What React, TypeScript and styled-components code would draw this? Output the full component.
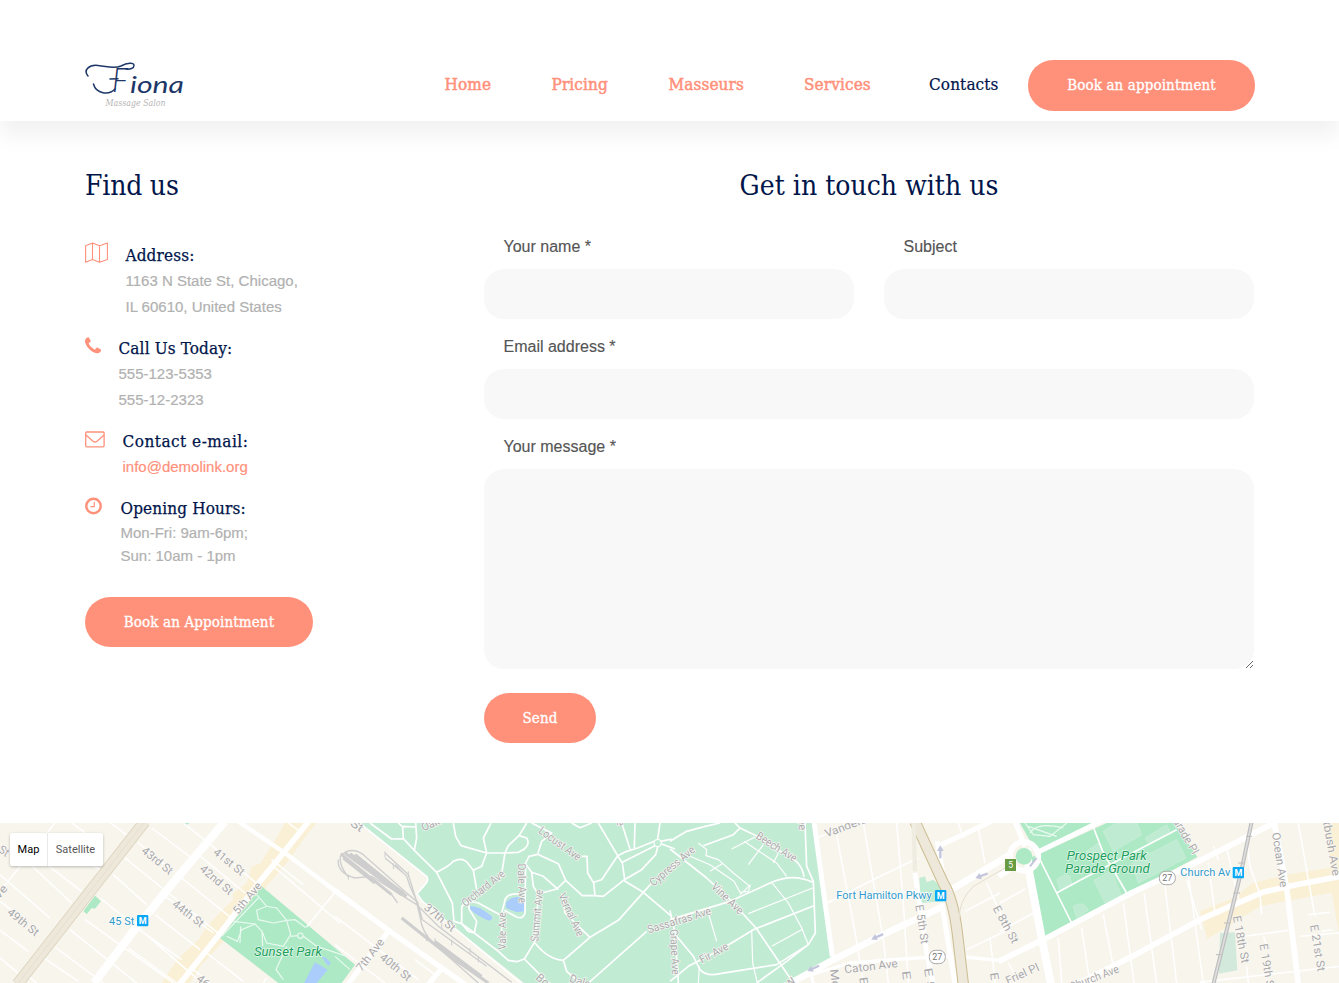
import React from 'react';
import styled, { createGlobalStyle } from 'styled-components';

const CORAL = '#ff917b';
const NAVY = '#00154a';
const SERIF = '"DejaVu Serif Condensed", "DejaVu Serif", serif';
const SANS = '"Liberation Sans", Arial, sans-serif';

const GlobalStyle = createGlobalStyle`
  * { box-sizing: border-box; }
  body { margin: 0; background: #fff; font-family: ${SANS}; overflow: hidden; }
`;

const Page = styled.div`
  width: 1339px;
  height: 983px;
  overflow: hidden;
  display: flex;
  flex-direction: column;
`;

const Header = styled.header`
  height: 121px;
  flex: none;
  padding: 60px 84px 10px 85px;
  display: flex;
  align-items: flex-start;
  box-shadow: 0 15px 20px rgba(0, 0, 0, 0.056);
`;

const Logo = styled.svg`
  width: 104px;
  height: 50px;
  flex: none;
  overflow: visible;
`;

const Nav = styled.nav`
  display: flex;
  gap: 59.5px;
  margin-left: auto;
  margin-right: 30px;
  height: 48px;
  align-items: center;
`;

const NavLink = styled.a<{ $w: number; $active?: boolean }>`
  font: 17px/24px ${SERIF};
  font-stretch: condensed;
  width: ${(p) => p.$w}px;
  white-space: nowrap;
  letter-spacing: 0.12px;
  color: ${(p) => (p.$active ? NAVY : CORAL)};
  -webkit-text-stroke: ${(p) => (p.$active ? '0.2px' : '0.5px')} currentColor;
`;

const Button = styled.button<{ $w: number; $h?: number }>`
  width: ${(p) => p.$w}px;
  height: ${(p) => p.$h ?? 50}px;
  flex: none;
  border: 0;
  padding: 0 0 ${(p) => (p.$h ? 2 : 0)}px;
  border-radius: 25px;
  background: ${CORAL};
  color: #fff;
  font: 15px/24px ${SERIF};
  font-stretch: condensed;
  letter-spacing: 0.12px;
  -webkit-text-stroke: 0.3px currentColor;
  white-space: nowrap;
`;

const Main = styled.main`
  display: flex;
  height: 702px;
  flex: none;
  padding: 44px 85px 0;
`;

const FindUs = styled.section`
  width: 399px;
  flex: none;
`;

const Contact = styled.form`
  width: 770px;
  flex: none;
`;

const Title = styled.h2<{ $center?: boolean }>`
  margin: 0;
  height: 40px;
  font: 400 28px/41px ${SERIF};
  font-stretch: condensed;
  letter-spacing: ${(p) => (p.$center ? 0.02 : -0.2)}px;
  color: ${NAVY};
  text-align: ${(p) => (p.$center ? 'center' : 'left')};
`;

const InfoList = styled.div`
  margin-top: 36px;
  display: flex;
  flex-direction: column;
`;

const InfoItem = styled.div<{ $h: number; $gap: number }>`
  display: flex;
  height: ${(p) => p.$h}px;
  column-gap: ${(p) => p.$gap}px;
`;

const InfoIcon = styled.svg`
  flex: none;
  margin-top: 1px;
`;

const InfoText = styled.div`
  display: flex;
  flex-direction: column;
`;

const InfoHead = styled.strong<{ $spacing?: number }>`
  height: 27px;
  font: 400 17px/29px ${SERIF};
  font-stretch: condensed;
  letter-spacing: ${(p) => p.$spacing ?? 0.14}px;
  -webkit-text-stroke: 0.25px currentColor;
  color: ${NAVY};
`;

const InfoLine = styled.span<{ $lh?: number; $accent?: boolean }>`
  font-size: 15px;
  line-height: ${(p) => p.$lh ?? 26}px;
  white-space: nowrap;
  color: ${(p) => (p.$accent ? CORAL : '#b1b1b1')};
  -webkit-text-stroke: 0.2px currentColor;
`;

const Fields = styled.div`
  display: grid;
  grid-template-columns: 1fr 1fr;
  column-gap: 30px;
  margin-top: 14px;
`;

const Field = styled.label<{ $wide?: boolean }>`
  grid-column: ${(p) => (p.$wide ? '1 / -1' : 'auto')};
  display: flex;
  flex-direction: column;
`;

const Label = styled.span`
  height: 50px;
  padding: 16px 0 0 19.5px;
  font-size: 16px;
  line-height: 24px;
  color: #555;
  -webkit-text-stroke: 0.15px currentColor;
`;

const Input = styled.input`
  height: 50px;
  width: 100%;
  border: 0;
  border-radius: 20px;
  background: #f8f8f8;
`;

const Message = styled.textarea`
  height: 200px;
  width: 100%;
  border: 0;
  border-radius: 20px;
  background: #f8f8f8;
  resize: vertical;
`;

const SendRow = styled.div`
  padding-top: 24px;
`;

const MapPanel = styled.section`
  position: relative;
  height: 160px;
  flex: none;
  overflow: hidden;
  background: #f8f5ed;
`;

const MapSvg = styled.svg`
  display: block;
`;

const MapSwitch = styled.div`
  position: absolute;
  left: 10px;
  top: 10px;
  height: 33px;
  display: flex;
  background: #fff;
  border-radius: 2px;
  box-shadow: 0 1px 3px rgba(0, 0, 0, 0.25);
`;

const MapTab = styled.span<{ $w: number; $active?: boolean }>`
  width: ${(p) => p.$w}px;
  font: 11px/33px Roboto, sans-serif;
  text-align: center;
  color: ${(p) => (p.$active ? '#000' : '#565656')};
  & + & { border-left: 1px solid #e8e8e8; }
`;

type StreetLabel = [number, number, number, number, string];
type Road = [width: number, d: string];

interface Sector {
  x: number;
  roads: Road[];
  labels: StreetLabel[];
}

/* Map units are one third of a pixel; each sector is offset by x pixels. */
const sectors: Sector[] = [
  {
    x: 0,
    roads: [
      [4.5, 'M215 0L300 62 M332 0L388 42 M165 0L0 205 M0 155L150 285 M70 105L215 240 M145 128L245 205 M0 235L60 280 M0 322L85 385 M0 405L60 455 M250 110L300 140'],
      [4.5, 'M455 15L575 105 M550 0L632 65L780 190 M595 95L735 210 M415 60L520 145 M545 165L700 290 M375 105L660 335 M340 155L440 245 M490 215L640 330 M300 225L445 340L600 475 M255 290L520 480 M210 320L410 480 M165 372L310 480 M125 400L235 475 M85 460L110 480 M385 375L530 480 M425 325L545 410 M465 275L600 380'],
      [4.5, 'M865 0L900 25 M815 110L910 185 M820 130L1020 300 M1005 208L920 312 M620 390L730 475 M575 435L630 480 M800 465L790 480'],
      [25, 'M282 480L400 325L520 178L674 -4'],
      [17, 'M538 484L665 325L780 175L850 90L925 -4'],
      [13, 'M716 -4L855 90L1022 216'],
    ],
    labels: [
      [430, 78, 515, 147, '43rd St'], [645, 82, 730, 150, '41st St'], [605, 132, 695, 208, '42nd St'],
      [522, 238, 608, 305, '44th St'], [27, 262, 113, 332, '49th St'], [705, 268, 778, 182, '5th Ave'],
      [595, 462, 680, 530, '46th St'], [0, 75, 25, 92, 'St'], [-28, 240, 15, 190, 'Ave'],
    ],
  },
  {
    x: 335,
    roads: [
      [4.5, 'M0 280L250 470 M0 365L110 450L150 480 M240 410L300 455'],
      [16, 'M-4 200L165 325L390 484 M160 325L38 484 M325 430L280 484'],
      [5, 'M73 0L275 160Q282 170 272 182L246 212L262 235L560 482'],
      [5, 'M105 0L170 48L205 47L238 82L305 148L352 240L357 295L380 302L418 330L490 385L520 412L545 416L568 408L630 470 M205 47L203 12L190 0 M238 82L245 45L242 0 M203 10L245 12 M305 148Q345 128 355 115Q385 100 402 125L415 142L425 200 M355 0L362 40L378 68L455 90L445 45L468 0 M455 90L440 130L415 142 M455 90L510 90L550 88Q590 70 575 45L552 38L520 68L510 90L502 140L498 165 M552 38L575 0 M380 302L380 260Q378 240 410 236L430 240L500 278 M400 238L403 260L425 295L418 330L400 325L380 302 M500 380L500 270L508 240Q510 210 550 213 M508 262L545 282Q565 290 570 270L572 120L582 100L608 94L620 55L650 30L590 0 M608 94L670 122L692 172L742 218L780 218L776 180L758 150L756 100L740 100 M570 120L590 148L625 160L670 200 M590 148L595 190L610 215L600 355L568 408 M692 172L665 198L620 210 M776 178L800 170L848 98L875 85L908 75L958 55 M848 98L790 0 M780 218L805 220L868 170L920 140L962 95L968 72 M848 98L862 120L870 175L925 208L1010 280 M862 118L960 68 M885 78L860 0 M898 75L900 0 M975 0L968 48 M978 62L1020 78 M978 55L1010 48 M680 212L690 270L765 343L850 292L925 208L950 180 M765 343L685 412Q640 410 600 360 M685 412L695 445L735 480 M760 480L935 325 M710 0L735 14L770 0'],
    ],
    labels: [
      [50, -4, 83, 18, 'St'], [260, 14, 312, -8, 'Oak'], [615, 18, 735, 105, 'Locust Ave'],
      [384, 243, 505, 148, 'Orchard Ave'], [560, 122, 563, 240, 'Dale Ave'], [500, 380, 500, 268, 'Vale Ave'],
      [598, 356, 612, 200, 'Summit Ave'], [680, 212, 738, 338, 'Vernal Ave'], [272, 248, 358, 318, '37th St'],
      [70, 440, 140, 350, '7th Ave'], [140, 397, 225, 467, '40th St'], [948, 182, 1075, 75, 'Cypress Ave'],
      [938, 320, 1127, 262, 'Sassafras Ave'], [608, 458, 670, 510, 'Boxw'], [705, 464, 765, 484, 'Dale'], [855, -38, 858, 8, 'Ave'],
    ],
  },
  {
    x: 670,
    roads: [
      [5, 'M0 55L50 25L105 10L150 0 M0 78L110 165L180 230L258 315L370 480 M100 68L190 35L210 15L258 38L330 85Q395 110 402 162 M210 15L195 0 M405 0L410 130L430 175L436 330L415 365L350 415L260 480 M0 290L180 235L305 178Q370 150 428 178 M432 248L250 320L155 378L55 430L0 475 M20 340L70 400L90 440Q110 462 150 452L320 425L415 365 M0 262L15 330L25 480'],
      [3.5, 'M85 60L110 80L108 98L145 110L190 150L240 190L235 205L210 208L192 175L120 125L60 100 M120 145L160 120 M210 215L242 185 M222 55L320 120L350 160 M185 78L255 42 M235 125L280 65 M310 120L325 90 M115 270L140 355 M305 178L355 240L395 315L415 365 M235 272L428 195 M305 370L395 320 M245 320L248 420L262 480 M85 480L88 430'],
      [4.5, 'M442 45L475 30 M497 20L560 355L580 480 M580 0L640 350L655 480 M680 0L700 240L715 480 M472 240L620 165L745 105 M700 210L735 200 M865 0L880 45 M925 15L945 120 M890 380L1020 318 M885 265L990 210 M960 345L968 410L975 480 M950 180L1000 290'],
      [10, 'M400 462L540 420L740 405L850 400 M885 402L985 412L1020 402 M425 460L430 484'],
      [15, 'M432 -4L487 400 M735 150L770 390L790 484 M802 55L818 150 M815 240L855 484 M800 72L962 -4'],
      [20, 'M365 478L490 410L660 325L815 252 M835 205L1025 92'],
    ],
    labels: [
      [465, 32, 590, -14, 'Vanderb'], [262, 35, 378, 108, 'Beech Ave'], [388, -34, 400, 22, 'Ave'],
      [130, 185, 216, 267, 'Vine Ave'], [90, 412, 172, 367, 'Fir Ave'], [523, 439, 683, 420, 'Caton Ave'],
      [748, 245, 765, 362, 'E 5th St'], [12, 318, 18, 455, 'Grape Ave'], [492, 438, 502, 520, 'McD'],
      [580, 462, 592, 555, 'E 3rd'], [708, 443, 722, 550, 'E 4th'], [774, 435, 790, 540, 'E 5th'], [972, 448, 985, 540, 'E 7th'], [350, 490, 372, 468, 'W'],
    ],
  },
  {
    x: 1000,
    roads: [
      [4.5, 'M0 240L75 198 M0 325L100 270 M25 420L42 450 M175 345L185 480 M245 315L270 480 M310 275L340 430 M370 240L402 480 M432 210L470 480 M495 190L530 480 M560 120L610 480 M640 70L655 110 M680 75L720 245 M560 170L605 320 M625 120L645 270 M740 50L750 130L780 215L785 275 M895 0L925 170L945 280 M925 275L990 268 M735 340L865 322 M965 325L995 320 M790 340L800 370 M740 430L745 480 M600 478L1020 430 M900 340L1020 330'],
      [5, 'M275 0L310 90L380 210 M120 110L170 210L215 300 M170 210L240 172L530 20'],
      [15, 'M108 90L300 -4 M45 -4L75 70'],
      [24, 'M80 75L88 150L125 345L153 484'],
      [17, 'M-4 160L40 132 M-4 415L130 350L390 212L590 118L700 62L830 -4 M230 484L400 398L600 290L690 250L790 207L900 183L1020 160 M822 -4L860 195L895 484'],
    ],
    labels: [
      [828, 28, 852, 192, 'Ocean Ave'], [972, -55, 1010, 158, 'Flatbush Ave'], [710, 278, 737, 420, 'E 18th St'],
      [790, 362, 814, 504, 'E 19th St'], [942, 305, 965, 445, 'E 21st St'], [18, 474, 115, 430, 'Friel Pl'],
      [210, 492, 355, 436, 'Church Ave'], [518, -30, 588, 90, 'Parade Pl'], [-12, 250, 48, 358, 'E 8th St'],
    ],
  },
];

const Street = ({ label: [x1, y1, x2, y2, text] }: { label: StreetLabel }) => (
  <text
    transform={`translate(${x1} ${y1}) rotate(${(Math.atan2(y2 - y1, x2 - x1) * 180) / Math.PI})`}
    y="12"
    textLength={Math.hypot(x2 - x1, y2 - y1)}
    lengthAdjust="spacingAndGlyphs"
  >
    {text}
  </text>
);

const Metro = ({ x, y }: { x: number; y: number }) => (
  <g>
    <rect x={x} y={y} width="34" height="34" rx="3" fill="#0ba8f5" />
    <text x={x + 17} y={y + 26.5} fontSize="27" fontWeight="700" fill="#fff" textAnchor="middle">M</text>
  </g>
);

const Shield = ({ x, y }: { x: number; y: number }) => (
  <g>
    <rect x={x - 24} y={y - 20} width="48" height="40" rx="18" fill="#fff" stroke="#aaa9a9" strokeWidth="3" />
    <text x={x} y={y + 10} fontSize="27" fill="#777" textAnchor="middle">27</text>
  </g>
);

const Arrow = ({ x, y, r }: { x: number; y: number; r: number }) => (
  <path transform={`translate(${x} ${y}) rotate(${r})`} d="M-20 0L-3 -10V-3.500H19V3.500H-3V10Z" fill="#c3c5dc" />
);

const CityMap = () => (
  <MapSvg width="1339" height="160" viewBox="0 0 4017 480">
    <g>
      <path d="M485 480L535 405L570 375L600 345L620 310L650 280L700 230L698 212L740 180L755 130L780 122L835 35L855 0H950L925 30L860 120L800 190L675 350L600 430L570 480Z" fill="#faf0d5" />
      <path d="M785 190L1065 425L1025 480H835L660 345Z" fill="#aee9c6" />
      <path d="M285 218L303 235L285 257L275 255L260 274L250 264Z M550 0H568L560 6Z" fill="#aee9c6" />
      <path d="M965 402Q975 398 992 420L985 430ZM945 418L983 440L950 480H912Z" fill="#aacdfb" />
      <path d="M1078 0L1280 160L1282 180L1250 215L1270 240L1572 480H2360L2495 405L2437 0Z" fill="#c2ebd4" />
      <path d="M1410 250Q1435 245 1475 280Q1480 292 1465 293Q1425 275 1410 258ZM1518 240Q1530 220 1560 222L1573 240L1572 265L1550 268L1518 255Z" fill="#aacdfb" />
      <path d="M2758 165L2775 160L2780 178L2800 170L2830 198L2828 235L2762 240Z" fill="#c2ebd4" />
      <path d="M3060 0H3300L3110 90Z" fill="#aee9c6" />
      <path d="M3090 105L3320 0H3525L3592 102L3390 210L3132 343Z" fill="#aee9c6" />
      <g fill="#bfebd2" stroke="#cdeedb" strokeWidth="2">
        <path d="M3310 25L3350 0H3410L3425 35L3340 85ZM3435 45L3500 5L3510 25L3445 60ZM3260 85L3295 60L3315 95L3270 115ZM3170 170Q3195 150 3210 160L3215 185L3180 200ZM3395 120L3530 50L3558 105L3415 180ZM3282 172L3335 143L3363 215L3315 240ZM3220 250Q3250 230 3265 262L3230 285Z" />
      </g>
      <path d="M3660 330L3705 328L3712 442L3657 452Z" fill="#d2e9dc" />
      <path d="M3600 265L3700 225L3758 180L3860 155L4017 130V205L3830 240L3780 250L3700 300L3622 348ZM3990 180H4017V330ZM3970 0H4017V160L4000 155Z" fill="#faf0d5" />
    </g>

    <g fill="none" stroke="#fff" strokeLinejoin="round">
      {sectors.map((s) => (
        <g key={s.x} transform={`translate(${s.x * 3} 0)`}>
          {s.roads.map(([w, d]) => <path key={d} d={d} strokeWidth={w} />)}
        </g>
      ))}
    </g>

    <g fill="none" stroke="#eafaf0" strokeWidth="3.5">
      <path d="M770 215L800 250L830 255L860 292L885 290L918 314M800 250L770 262L775 290L820 300L860 292L872 335L850 370L800 360L786 325L765 303L725 320L712 355L680 340M700 295L765 303M775 225L665 340M786 325L788 370M872 340L893 338M910 340L950 370L1040 400M860 370L828 440L850 470M722 310L720 360" />
      <circle cx="901" cy="338" r="8" />
      <circle cx="1973" cy="60" r="11" stroke="#fff" />
      <path d="M3075 0L3100 35L3150 40L3200 0M3090 30Q3110 -5 3190 15M3085 10L3170 40M1005 400L1050 440" />
    </g>
    <circle cx="3072" cy="100" r="43" fill="none" stroke="#fff" strokeWidth="17" />
    <circle cx="3072" cy="100" r="25" fill="#aee9c6" />
    <path d="M3090 130L3110 105" stroke="#c3c5dc" strokeWidth="6" />

    <g fill="none">
      <path d="M52 484L434 -4" stroke="#dcd3bd" strokeWidth="35" />
      <path d="M52 484L434 -4" stroke="#eee8da" strokeWidth="30" />
      <path d="M52 484L434 -4" stroke="#e2dac8" strokeWidth="2" />
      <path d="M2745 -4L2830 180Q2860 230 2872 330L2890 484" stroke="#cbbd91" strokeWidth="34" />
      <path d="M2745 -4L2830 180Q2860 230 2872 330L2890 484" stroke="#eee8da" strokeWidth="28" />
      <path d="M2878 290Q2875 235 2920 190L3015 135" stroke="#e5dfd0" strokeWidth="3" />
      <path d="M2741 0L2745 145" stroke="#efece2" strokeWidth="13" />
      <path d="M3755 -4L3725 140L3640 484" stroke="#bdbdbd" strokeWidth="12" />
      <path d="M3755 -4L3725 140L3640 484" stroke="#dedede" strokeWidth="5" />
      <path d="M3738 40h18M3715 120h20M3700 210h20M3672 300h18M3648 395h18" stroke="#bdbdbd" strokeWidth="3" />
    </g>

    <g transform="translate(1005 0)" fill="none" stroke="#cecece" strokeWidth="4">
      <path strokeWidth="9" d="M20 95L170 215M30 90L200 215M45 92L205 210M60 95L215 220M25 105L120 180" />
      <path strokeWidth="4" d="M20 95Q50 70 85 95L215 210L250 240M10 110Q5 150 60 165L110 160L245 245M20 90Q5 120 40 162M150 90L220 155L240 220L255 280Q260 330 300 365L430 480M180 125L215 160L225 190L248 240L262 290L455 430M250 250L310 310L530 478M170 215L188 240M150 105L205 150" />
      <path strokeWidth="9" d="M200 285L275 345L345 400L460 480M300 355L440 460" />
      <path strokeWidth="3" d="M150 85v18M175 120v18M220 145v18M275 335v20M300 345v25M370 405v18M350 350v18M405 375v18M430 400v18M320 300v18M40 155v15" />
    </g>

    <g fontFamily="Roboto, sans-serif" fontSize="34" fill="#aaa9ac" stroke="#fbfaf6" strokeWidth="4" paintOrder="stroke">
      {sectors.map((s) => (
        <g key={s.x} transform={`translate(${s.x * 3} 0)`}>
          {s.labels.map((l) => <Street key={l.join()} label={l} />)}
        </g>
      ))}
    </g>

    <g fontFamily="Roboto, sans-serif">
      <Arrow x={2821} y={87} r={90} />
      <Arrow x={2945} y={158} r={-20} />
      <Arrow x={2632} y={341} r={-24} />
      <Arrow x={2440} y={436} r={-24} />
      <Shield x={2812} y={402} />
      <Shield x={3502} y={165} />
      <Metro x={411} y={276} />
      <Metro x={2805 - 340 + 340} y={201} />
      <Metro x={3698} y={132} />
      <rect x="3015" y="108" width="33" height="36" fill="#699b42" />
      <text x="3032" y="136" fontSize="26" fill="#fff" textAnchor="middle">5</text>
      <g fontSize="33" fill="#329ac9" stroke="#fff" strokeWidth="4" paintOrder="stroke">
        <text x="327" y="306" textLength="76">45 St</text>
        <text x="2509" y="228" textLength="286">Fort Hamilton Pkwy</text>
        <text x="3541" y="158" textLength="150">Church Av</text>
      </g>
      <g fontSize="38.5" fontStyle="italic" fill="#20a05c" stroke="#e4f7ec" strokeWidth="4" paintOrder="stroke">
        <text x="762" y="400" textLength="204" lengthAdjust="spacingAndGlyphs">Sunset Park</text>
        <text x="3200" y="112" textLength="240" lengthAdjust="spacingAndGlyphs">Prospect Park</text>
        <text x="3195" y="151" textLength="254" lengthAdjust="spacingAndGlyphs">Parade Ground</text>
      </g>
    </g>
  </MapSvg>
);

const links: { name: string; w: number; active?: boolean }[] = [
  { name: 'Home', w: 47.5 },
  { name: 'Pricing', w: 57.5 },
  { name: 'Masseurs', w: 76 },
  { name: 'Services', w: 65.5 },
  { name: 'Contacts', w: 69, active: true },
];

export default function App() {
  return (
    <Page>
      <GlobalStyle />
      <Header>
        <Logo viewBox="0 0 104 50">
          <g fill="none" stroke="#1d3768" strokeWidth="1.5" strokeLinecap="round">
            <path d="M3 16C-2 10 4 4.500 13 5.500C23 6.500 29 9 36 6C42 3 49 2 49 5.500C49 8.500 45 9.500 41 9" />
            <path d="M8.500 24C11 34 24 35.500 30 29" />
            <path d="M25 19L33 18.700" />
          </g>
          <g fontFamily="Lato, sans-serif" fontStyle="italic" fill="#1d3768">
            <text x="27" y="32" fontSize="33" fontWeight="300" textLength="16" lengthAdjust="spacingAndGlyphs">F</text>
            <text x="45" y="32.5" fontSize="23" textLength="54" lengthAdjust="spacingAndGlyphs">iona</text>
          </g>
          <text x="20.5" y="46" fontFamily={SERIF} fontStyle="italic" fontSize="8.5" fill="#b5b5b5" textLength="60" lengthAdjust="spacingAndGlyphs">Massage Salon</text>
        </Logo>
        <Nav>
          {links.map((l) => (
            <NavLink key={l.name} $w={l.w} $active={l.active}>{l.name}</NavLink>
          ))}
        </Nav>
        <Button $w={227} $h={51}>Book an appointment</Button>
      </Header>

      <Main>
        <FindUs>
          <Title>Find us</Title>
          <InfoList>
            <InfoItem $h={93} $gap={17.5}>
              <InfoIcon width="23" height="22" viewBox="0 0 23 22" fill="none" stroke={CORAL} strokeWidth="1.1" strokeLinejoin="round">
                <path d="M.6 3.800L7.500 1L14.500 3.800L22.400 1V17.500L14.500 20.300L7.500 17.500L.6 20.300ZM7.500 1V17.500M14.500 3.800V20.300" />
              </InfoIcon>
              <InfoText>
                <InfoHead>Address:</InfoHead>
                <InfoLine>1163 N State St, Chicago,</InfoLine>
                <InfoLine>IL 60610, United States</InfoLine>
              </InfoText>
            </InfoItem>
            <InfoItem $h={93} $gap={17.5}>
              <InfoIcon width="16" height="20" viewBox="192 16 1408 1584" fill={CORAL}>
                <path d="M1600 1240q0 27-10 70.5t-21 68.5q-21 50-122 106-94 51-186 51-27 0-53-3.5t-57.5-12.5-47-14.5-55.5-20.5-49-18q-98-35-175-83-127-79-264-216t-216-264q-48-77-83-175-3-9-18-49t-20.5-55.5-14.5-47-12.5-57.5-3.5-53q0-92 51-186 56-101 106-122 25-11 68.5-21t70.5-10q14 0 21 3 18 6 53 76 11 19 30 54t35 63.5 31 53.5q3 4 17.5 25t21.5 35.5 7 28.5q0 20-28.5 50t-62 55-62 53-28.5 46q0 9 5 22.5t8.5 20.5 14 24 11.5 19q76 137 174 235t235 174q2 1 19 11.5t24 14 20.5 8.5 22.5 5q18 0 46-28.5t53-62 55-62 50-28.5q14 0 28.5 7t35.5 21.5 25 17.5q25 15 53.5 31t63.5 35 54 30q70 35 76 53 3 7 3 21z" />
              </InfoIcon>
              <InfoText>
                <InfoHead>Call Us Today:</InfoHead>
                <InfoLine>555-123-5353</InfoLine>
                <InfoLine>555-12-2323</InfoLine>
              </InfoText>
            </InfoItem>
            <InfoItem $h={67} $gap={17.5}>
              <InfoIcon width="20" height="20" viewBox="0 0 20 20" fill="none" stroke={CORAL} strokeWidth="1.3" strokeLinejoin="round">
                <rect x=".7" y="4" width="18.4" height="14.8" rx="1" />
                <path d="M.9 7L8 13.200Q10 14.800 12 13.200L19 7" />
              </InfoIcon>
              <InfoText>
                <InfoHead $spacing={0.5}>Contact e-mail:</InfoHead>
                <InfoLine $accent>info@demolink.org</InfoLine>
              </InfoText>
            </InfoItem>
            <InfoItem $h={103} $gap={18.5}>
              <InfoIcon width="17" height="20" viewBox="0 0 17 20" fill="none" stroke={CORAL}>
                <circle cx="8.5" cy="11" r="7.2" strokeWidth="2.4" />
                <path d="M9.300 7V11.700H5.500" strokeWidth="1.2" />
              </InfoIcon>
              <InfoText>
                <InfoHead>Opening Hours:</InfoHead>
                <InfoLine $lh={23}>Mon-Fri: 9am-6pm;</InfoLine>
                <InfoLine $lh={23}>Sun: 10am - 1pm</InfoLine>
              </InfoText>
            </InfoItem>
          </InfoList>
          <Button $w={228} type="button">Book an Appointment</Button>
        </FindUs>

        <Contact>
          <Title $center>Get in touch with us</Title>
          <Fields>
            <Field><Label>Your name *</Label><Input /></Field>
            <Field><Label>Subject</Label><Input /></Field>
            <Field $wide><Label>Email address *</Label><Input /></Field>
            <Field $wide><Label>Your message *</Label><Message /></Field>
          </Fields>
          <SendRow><Button $w={112} type="button">Send</Button></SendRow>
        </Contact>
      </Main>

      <MapPanel>
        <CityMap />
        <MapSwitch>
          <MapTab $w={37} $active>Map</MapTab>
          <MapTab $w={56}>Satellite</MapTab>
        </MapSwitch>
      </MapPanel>
    </Page>
  );
}
